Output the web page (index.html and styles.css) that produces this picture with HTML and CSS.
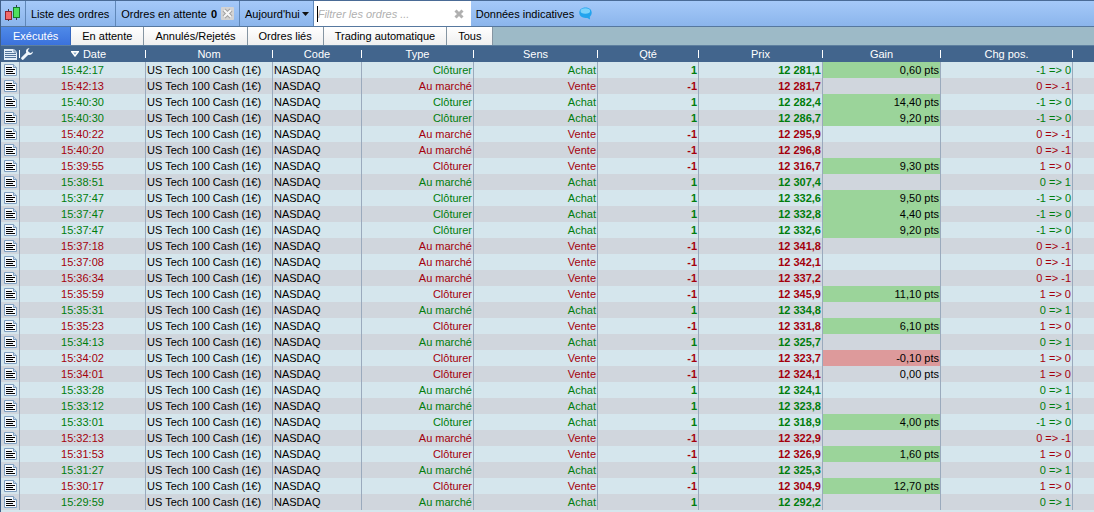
FILE: index.html
```html
<!DOCTYPE html>
<html lang="fr">
<head>
<meta charset="utf-8">
<title>Liste des ordres</title>
<link rel="stylesheet" href="styles.css">
</head>
<body>
<svg class="sprite" aria-hidden="true">
  <symbol id="note" viewBox="0 0 13 12">
    <path d="M.5 .5H9.500L12.500 3.500V11.500H.5Z" fill="#f4f8fc" stroke="#7f9fc0"/>
    <path d="M9.500 .5V3.500H12.500" fill="#c6d8ea" stroke="#7f9fc0"/>
    <path d="M2 3.500H8M2 5.500H11M2 7.500H9M2 9.500H11" stroke="#000"/>
  </symbol>
</svg>
<main class="orders">
  <header class="toolbar">
    <div class="tool logo">
      <svg width="17" height="17" viewBox="0 0 17 17" aria-hidden="true">
        <path d="M4.500 4V16M12.500 0V15" stroke="#333c50"/>
        <rect x="1.500" y="6.500" width="6" height="8" fill="#f26a6a" stroke="#8e2430"/>
        <rect x="9.500" y="2.500" width="6" height="10" fill="#4fe05c" stroke="#167a2c"/>
      </svg>
    </div>
    <div class="tool title">Liste des ordres</div>
    <div class="tool pending">Ordres en attente <b>0</b>
      <button class="cancel" aria-label="Annuler les ordres">
        <svg width="13" height="13" viewBox="0 0 13 13"><rect width="13" height="13" rx="1" fill="#d3d3d3"/><path d="M3 3L10 10M10 3L3 10" stroke="#a2a2a2" stroke-width="4"/><path d="M3 3L10 10M10 3L3 10" stroke="#f6f6f6" stroke-width="2"/></svg>
      </button>
    </div>
    <button class="tool period">Aujourd'hui<svg width="7" height="4" viewBox="0 0 7 4"><path d="M0 0H7L3.500 4Z" fill="#111"/></svg></button>
    <div class="search">
      <span class="caret"></span>
      <input type="text" aria-label="Filtrer les ordres" placeholder="Filtrer les ordres ...">
      <button class="clear" aria-label="Effacer">
        <svg width="10" height="10" viewBox="0 0 10 10"><path d="M1.500 1.500L8.500 8.500M8.500 1.500L1.500 8.500" stroke="#b0b0b0" stroke-width="3"/></svg>
      </button>
    </div>
    <div class="notice">Données indicatives
      <svg width="13" height="13" viewBox="0 0 13 13" aria-hidden="true">
        <path d="M6.500 .5C10.500 .5 12.700 2.800 12.700 5.700C12.700 7.500 11.900 8.800 10.800 9.700L11 12.500L8.300 10.900C3.500 11.600 .3 9 .3 5.800C.3 2.800 2.500 .5 6.500 .5Z" fill="#22a4ee"/>
        <ellipse cx="6.300" cy="4" rx="4.800" ry="2.800" fill="#7ad2fb"/>
      </svg>
    </div>
  </header>
  <nav class="tabs">
    <button class="tab active">Exécutés</button>
    <button class="tab">En attente</button>
    <button class="tab">Annulés/Rejetés</button>
    <button class="tab">Ordres liés</button>
    <button class="tab">Trading automatique</button>
    <button class="tab">Tous</button>
  </nav>
  <table class="grid">
    <colgroup>
      <col class="c-note"><col class="c-date"><col class="c-name"><col class="c-code"><col class="c-type"><col class="c-side"><col class="c-qty"><col class="c-price"><col class="c-gain"><col class="c-pos"><col>
    </colgroup>
    <thead>
      <tr>
        <th class="note-head"><svg width="13" height="11" viewBox="0 0 13 11"><path d="M0 0H10L13 3V11H0Z" fill="#e4eef8"/><path d="M10 0V3H13" fill="none" stroke="#6f8fb0"/><path d="M1 2.500H8M1 4.500H12M1 6.500H12M1 8.500H12" stroke="#54759b"/></svg></th>
        <th><div class="date-head"><svg width="12" height="12" viewBox="0 0 12 12"><path d="M1.700 10.300L7 5" stroke="#eef5fb" stroke-width="3" stroke-linecap="round"/><path d="M8.500 0C6 .2 4.600 2 5 4.200L7.500 7C10 7.400 11.800 5.800 12 3.500L9.800 5L7.300 4.600L7 2.300Z" fill="#eef5fb"/></svg><span class="sort"><svg width="8" height="6" viewBox="0 0 8 6"><path d="M.7 .7H7.300L4 5Z" fill="#86a6c6" stroke="#fff" stroke-width="1.400"/></svg>Date</span></div></th>
        <th>Nom</th><th>Code</th><th>Type</th><th>Sens</th><th>Qté</th><th>Prix</th><th>Gain</th><th>Chg pos.</th><th class="rest"></th>
      </tr>
    </thead>
    <tbody id="rows"></tbody>
  </table>
</main>
<script src="orders.js"></script>
</body>
</html>
```
FILE: styles.css
```css
* { box-sizing: border-box; }

body {
  margin: 0;
  height: 100vh;
  overflow: hidden;
  background: #d5e6ed;
  color: #000;
  font: 11px/16px "Liberation Sans", Arial, sans-serif;
}

button, input {
  margin: 0;
  padding: 0;
  border: 0;
  border-radius: 0;
  background: none;
  color: inherit;
  font: inherit;
}

.sprite { position: absolute; width: 0; height: 0; }

.orders { min-height: 100vh; border-left: 1px solid #3f5f88; }

.toolbar {
  display: flex;
  height: 27px;
  border-top: 1px solid #4a6b96;
  border-bottom: 1px solid #56789f;
  background: linear-gradient(#a5c9f8, #8bb5ec);
}

.tool {
  display: flex;
  align-items: center;
  padding: 0 5px;
  border-right: 1px solid #5f87b8;
  white-space: nowrap;
}

.tool.logo { padding: 0 4px 0 3px; }
.tool.title { padding-right: 6px; }
.tool.pending b { margin: 0 4px; }
.tool.period { gap: 2px; padding-right: 4px; }

.cancel, .clear { display: flex; }

.search {
  display: flex;
  align-items: center;
  width: 157px;
  padding: 0 7px 0 3px;
  background: #fff;
}

.search .caret { width: 1px; height: 16px; background: #000; }

.search input {
  flex: 1;
  min-width: 0;
  outline: 0;
  font-style: italic;
}

.search input::placeholder { color: #b0b0b0; opacity: 1; }

.notice {
  display: flex;
  flex: 1;
  align-items: center;
  gap: 5px;
  padding-left: 5px;
}

.tabs {
  display: flex;
  height: 19px;
  border-bottom: 1px solid #5d7f9f;
  background: #9dbac7;
}

.tab {
  padding: 0 11px;
  border-right: 1px solid #8595a2;
  background: linear-gradient(#fff, #efefef);
}

.tab.active {
  padding: 0 12px;
  border-right-color: #3567c0;
  background: linear-gradient(#4f8ae8, #3b72dc);
  color: #fff;
}

.grid {
  width: 100%;
  border-collapse: collapse;
  table-layout: fixed;
}

.c-note { width: 19px; }
.c-date { width: 126px; }
.c-name { width: 127px; }
.c-code { width: 89px; }
.c-type { width: 112px; }
.c-side { width: 124px; }
.c-qty { width: 101px; }
.c-price { width: 124px; }
.c-gain { width: 118px; }
.c-pos { width: 132px; }

.grid th, .grid td {
  height: 16px;
  padding: 0 2px 0 1px;
  overflow: hidden;
  white-space: nowrap;
}

.grid th {
  background: linear-gradient(#fff, #fff) right center / 1px 8px no-repeat;
  color: #fff;
  font-weight: normal;
}

.grid th.rest { background: none; }
.grid thead { background: #42658d; }
.grid th svg, .grid td svg { display: block; }
.note-head svg { margin-left: 2px; }

.date-head { display: flex; align-items: center; }

.sort {
  display: flex;
  flex: 1;
  align-items: center;
  justify-content: center;
  gap: 4px;
}

.grid tbody tr { background: #d5e6ed; }
.grid tbody tr:nth-child(even) { background: #d0d6dd; }

.grid td {
  background: linear-gradient(#9aaabd, #9aaabd) right / 1px 100% no-repeat;
  text-align: right;
}

.grid td.note { padding-left: 3px; }
.grid td.date { text-align: center; }
.grid td.text { text-align: left; }
.grid td.num { font-weight: bold; }
.grid td.win { background-color: #9bd49a; }
.grid td.loss { background-color: #dd9a9b; }
.grid td.rest { background: none; }
.buy .tint { color: #007d0c; }
.sell .tint { color: #a4000c; }
```
FILE: orders.js
```js
// time | type (C: Clôturer, M: Au marché) | side (A: Achat, V: Vente) | price | gain
const orders = `15:42:17|C|A|12 281,1|0,60
15:42:13|M|V|12 281,7|
15:40:30|C|A|12 282,4|14,40
15:40:30|C|A|12 286,7|9,20
15:40:22|M|V|12 295,9|
15:40:20|M|V|12 296,8|
15:39:55|C|V|12 316,7|9,30
15:38:51|M|A|12 307,4|
15:37:47|C|A|12 332,6|9,50
15:37:47|C|A|12 332,8|4,40
15:37:47|C|A|12 332,6|9,20
15:37:18|M|V|12 341,8|
15:37:08|M|V|12 342,1|
15:36:34|M|V|12 337,2|
15:35:59|C|V|12 345,9|11,10
15:35:31|M|A|12 334,8|
15:35:23|C|V|12 331,8|6,10
15:34:13|M|A|12 325,7|
15:34:02|C|V|12 323,7|-0,10
15:34:01|C|V|12 324,1|0,00
15:33:28|M|A|12 324,1|
15:33:12|M|A|12 323,8|
15:33:01|C|A|12 318,9|4,00
15:32:13|M|V|12 322,9|
15:31:53|C|V|12 326,9|1,60
15:31:27|M|A|12 325,3|
15:30:17|C|V|12 304,9|12,70
15:29:59|M|A|12 292,2|`;

const positions = { CA: '-1 => 0', MV: '0 => -1', CV: '1 => 0', MA: '0 => 1' };

document.getElementById('rows').innerHTML = orders.split('\n').map(line => {
  const [time, type, side, price, gain] = line.split('|');
  const buy = side === 'A';
  const tone = !gain || gain === '0,00' ? '' : gain[0] === '-' ? 'loss' : 'win';
  return `<tr class="${buy ? 'buy' : 'sell'}">
    <td class="note"><svg width="13" height="12"><use href="#note"/></svg></td>
    <td class="date tint">${time}</td>
    <td class="text">US Tech 100 Cash (1€)</td>
    <td class="text">NASDAQ</td>
    <td class="tint">${type === 'C' ? 'Clôturer' : 'Au marché'}</td>
    <td class="tint">${buy ? 'Achat' : 'Vente'}</td>
    <td class="num tint">${buy ? '1' : '-1'}</td>
    <td class="num tint">${price}</td>
    <td class="gain ${tone}">${gain ? gain + ' pts' : ''}</td>
    <td class="pos tint">${positions[type + side]}</td>
    <td class="rest"></td>
  </tr>`;
}).join('');
```
